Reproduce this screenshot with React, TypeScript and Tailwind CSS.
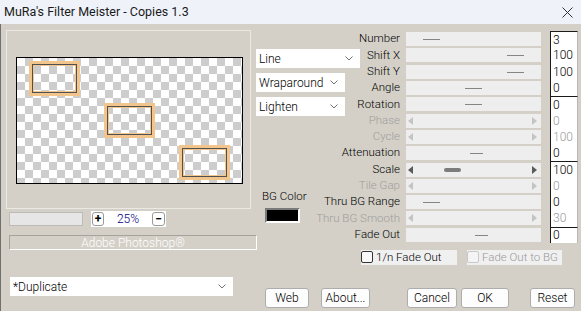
import React from 'react';

type Row = {
  label: string;
  value: string;
  disabled?: boolean;
  arrows?: boolean;
  thumb?: { left: number; width: number; thick?: boolean };
  top?: boolean;
};

const rows: Row[] = [
  { label: 'Number', value: '3', thumb: { left: 17, width: 17 }, top: true },
  { label: 'Shift X', value: '100', thumb: { left: 101, width: 17 } },
  { label: 'Shift Y', value: '100', thumb: { left: 101, width: 17 } },
  { label: 'Angle', value: '0', thumb: { left: 59, width: 17 } },
  { label: 'Rotation', value: '0', thumb: { left: 59, width: 17 }, top: true },
  { label: 'Phase', value: '0', disabled: true, arrows: true },
  { label: 'Cycle', value: '100', disabled: true, arrows: true },
  { label: 'Attenuation', value: '0', thumb: { left: 64, width: 13 } },
  { label: 'Scale', value: '100', arrows: true, thumb: { left: 38, width: 17, thick: true }, top: true },
  { label: 'Tile Gap', value: '0', disabled: true, arrows: true },
  { label: 'Thru BG Range', value: '0', thumb: { left: 17, width: 17 } },
  { label: 'Thru BG Smooth', value: '30', disabled: true, arrows: true },
  { label: 'Fade Out', value: '0', thumb: { left: 69, width: 13 }, top: true },
];

const font = { fontFamily: 'Roboto, "Liberation Sans", Arial, sans-serif' };

function Chevron() {
  return (
    <svg width="8" height="5" viewBox="0 0 8 5" className="shrink-0">
      <path d="M0.5 0.5 L4 4 L7.5 0.5" fill="none" stroke="#707070" strokeWidth="1" />
    </svg>
  );
}

function Select({ text, className }: { text: string; className: string }) {
  return (
    <div className={`flex items-center justify-between bg-white pl-[3px] pr-[7px] text-[12px] font-light text-black ${className}`}>
      <span>{text}</span>
      <Chevron />
    </div>
  );
}

function Arrow({ dir, color }: { dir: 'l' | 'r'; color: string }) {
  return (
    <svg width="5" height="8" viewBox="0 0 5 8">
      <path d={dir === 'l' ? 'M5 0 L0 4 L5 8 Z' : 'M0 0 L5 4 L0 8 Z'} fill={color} />
    </svg>
  );
}

function Slider({ row }: { row: Row }) {
  const arrowColor = row.disabled ? '#c4c4c4' : '#5a5a5a';
  return (
    <div className="relative ml-[6px] flex h-[14px] w-[135px] items-center justify-between bg-[#eeeeee] pl-[2px] pr-[4px]">
      {row.arrows ? <Arrow dir="l" color={arrowColor} /> : <span />}
      {row.arrows ? <Arrow dir="r" color={arrowColor} /> : <span />}
      {row.thumb && (
        <div
          className={
            row.thumb.thick
              ? 'absolute top-[5px] h-[4px] rounded-full bg-[#7c7c7c]'
              : 'absolute top-[7px] h-px bg-[#858585]'
          }
          style={{ left: row.thumb.left, width: row.thumb.width }}
        />
      )}
    </div>
  );
}

function Btn({ text, className }: { text: string; className: string }) {
  return (
    <div
      className={`flex h-[20px] items-center justify-center rounded-[3px] border border-[#adadad] bg-[#fdfdfd] text-[12px] font-light text-black ${className}`}
    >
      {text}
    </div>
  );
}

function OrangeBox({ x, y }: { x: number; y: number }) {
  return (
    <div className="absolute h-[35px] w-[51px] border-[3px] border-[#f1c58c]" style={{ left: x, top: y }}>
      <div className="h-full w-full border border-[#505050]">
        <div className="h-full w-full border border-[#f1c58c]" />
      </div>
    </div>
  );
}

export default function App() {
  return (
    <div className="h-[311px] w-[581px] overflow-hidden select-none" style={font}>
      {/* title bar */}
      <div className="flex h-[24px] items-center justify-between bg-[#eff3f9] pl-[4px] pr-[8px]">
        <span className="text-[12.5px] text-[#1a1a1a]">MuRa's Filter Meister - Copies 1.3</span>
        <svg width="11" height="11" viewBox="0 0 11 11">
          <path d="M0.5 0.5 L10.5 10.5 M10.5 0.5 L0.5 10.5" stroke="#333" strokeWidth="1" />
        </svg>
      </div>

      <div className="flex h-[287px] border-l border-[#707070] bg-[#d4d0c8]">
        {/* left column */}
        <div className="flex w-[255px] flex-col pl-[5px] pt-[6px]">
          <div className="h-[179px] w-[245px] border border-[#ebe9e4] pl-[9px] pt-[26px]">
            <div className="h-[127px] w-[227px] border border-black">
              <div className="relative h-full w-full bg-[conic-gradient(#cdcdcd_25%,#ffffff_0_50%,#cdcdcd_0_75%,#ffffff_0)] bg-[length:16px_16px]">
                <OrangeBox x={12} y={3} />
                <OrangeBox x={87} y={45} />
                <OrangeBox x={162} y={87} />
              </div>
            </div>
          </div>

          <div className="mt-[2px] flex items-start">
            <div className="ml-[3px] mt-[1px] h-[14px] w-[74px] border border-[#bdbbb5] bg-[#e6e6e6]" />
            <div className="ml-[8px] flex h-[16px] w-[75px] items-center justify-between bg-white px-px">
              <div className="flex h-[14px] w-[12px] items-center justify-center rounded-[3px] border border-[#9a9a9a] text-[12px] font-bold leading-none text-black">
                +
              </div>
              <span className="text-[12px] font-light text-[#000080]">25%</span>
              <div className="flex h-[14px] w-[13px] items-center justify-center rounded-[3px] border border-[#9a9a9a] text-[12px] font-bold leading-none text-black">
                −
              </div>
            </div>
          </div>

          <div className="ml-[3px] mt-[8px] flex h-[15px] w-[248px] items-center justify-center border border-b-white border-l-[#a6a39c] border-r-white border-t-[#a6a39c] text-[12px] font-light text-white">
            Adobe Photoshop®
          </div>

          <Select text="*Duplicate" className="ml-[4px] mt-[27px] h-[19px] w-[223px]" />
        </div>

        {/* right part */}
        <div className="flex flex-1 flex-col">
          <div className="flex">
            <div className="flex w-[104px] flex-col pt-[25px]">
              <Select text="Line" className="h-[19px] w-[104px]" />
              <Select text="Wraparound" className="mt-[5px] h-[19px] w-[89px]" />
              <Select text="Lighten" className="mt-[5px] h-[19px] w-[89px]" />
              <span className="ml-[6px] mt-[74px] text-[11.5px] font-light leading-[13px] text-black">BG Color</span>
              <div className="ml-[9px] mt-[5px] h-[15px] w-[35px] border-[2px] border-[#7a7a7a] border-b-white border-r-white bg-black" />
            </div>

            <div className="flex flex-col pt-[7px]">
              {rows.map((r) => (
                <div key={r.label} className="flex h-[16.3px] items-center">
                  <div className="flex w-[40px] justify-end">
                    <span
                      className={`whitespace-nowrap text-[11.5px] font-light leading-none ${
                        r.disabled ? 'text-[#a09e9a]' : 'text-black'
                      }`}
                    >
                      {r.label}
                    </span>
                  </div>
                  <Slider row={r} />
                  <div
                    className={`ml-[9px] flex h-full w-[28px] items-center border-l border-r border-l-[#1a1a1a] border-r-[#b8b8b8] bg-white pl-[2px] text-[12px] font-light leading-none ${
                      r.top ? 'border-t border-t-[#1a1a1a]' : ''
                    } ${r.disabled ? 'text-[#9a9a9a]' : 'text-black'}`}
                  >
                    {r.value}
                  </div>
                </div>
              ))}
            </div>
          </div>

          <div className="ml-[105px] mt-[7px] flex">
            <div className="flex h-[15px] w-[96px] items-center bg-[#f0f0f0]">
              <div className="h-[12px] w-[12px] rounded-[2px] border border-[#333] bg-[#f8f8f8]" />
              <span className="ml-[3px] whitespace-nowrap text-[11.5px] font-light text-black">1/n Fade Out</span>
            </div>
            <div className="ml-[10px] flex h-[15px] w-[95px] items-center bg-[#f0f0f0]">
              <div className="h-[12px] w-[12px] rounded-[2px] border border-[#c8c8c8] bg-[#f4f4f4]" />
              <span className="ml-[3px] whitespace-nowrap text-[11.5px] font-light text-[#9a9a9a]">Fade Out to BG</span>
            </div>
          </div>

          <div className="mt-[23px] flex">
            <Btn text="Web" className="ml-[9px] w-[44px]" />
            <Btn text="About..." className="ml-[12px] w-[49px]" />
            <Btn text="Cancel" className="ml-[37px] w-[50px]" />
            <Btn text="OK" className="ml-[4px] w-[48px]" />
            <Btn text="Reset" className="ml-[21px] w-[45px]" />
          </div>
        </div>
      </div>
    </div>
  );
}
